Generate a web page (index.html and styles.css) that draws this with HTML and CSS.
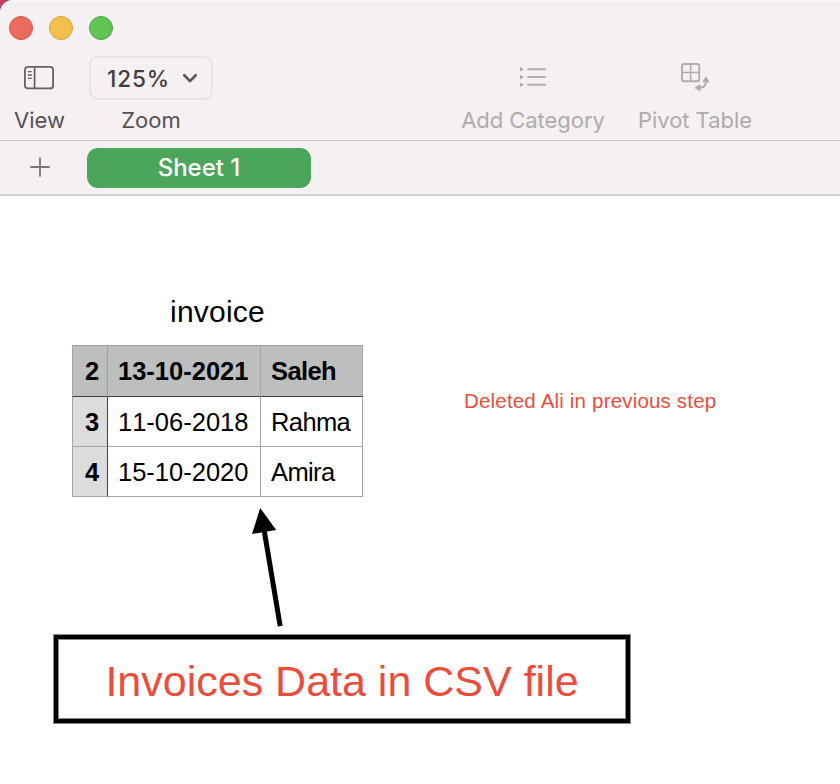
FILE: index.html
```html
<!DOCTYPE html>
<html lang="en">
<head>
<meta charset="utf-8">
<title>invoice</title>
<link rel="stylesheet" href="styles.css">
</head>
<body>
<div class="window">
  <header class="chrome">
    <div class="lights"><span class="light red"></span><span class="light yellow"></span><span class="light green"></span></div>
    <div class="toolbar">
      <div class="tool view">
        <div class="tool-icon"><svg width="32" height="26" viewBox="0 0 32 26" fill="none" stroke="#656163"><rect x="1.9" y="1.8" width="28.2" height="21.6" rx="3" stroke-width="1.8"/><path d="M11.6 2v21" stroke-width="1.7"/><path d="M4.8 6.7h4M4.8 10h4M4.8 13.4h4" stroke-width="1.3"/></svg></div>
        <span class="label">View</span>
      </div>
      <div class="tool zoom">
        <div class="tool-icon select"><span class="percent">125%</span><svg width="16" height="12" viewBox="0 0 16 12" fill="none" stroke="#5c585a" stroke-width="2.7" stroke-linecap="round" stroke-linejoin="round"><path d="M2.3 3.2 8 9.1l5.7-5.9"/></svg></div>
        <span class="label">Zoom</span>
      </div>
      <div class="tool category disabled">
        <div class="tool-icon"><svg width="28" height="24" viewBox="0 0 28 24"><path d="M1 2v4.6l4-2.3zM1 9.7v4.6l4-2.3zM1 17.4V22l4-2.3z" fill="#aeabac"/><path d="M9 4.3h17M9 12h17M9 19.7h17" stroke="#b2afb0" stroke-width="2" stroke-linecap="round"/></svg></div>
        <span class="label">Add Category</span>
      </div>
      <div class="tool pivot disabled">
        <div class="tool-icon"><svg width="30" height="30" viewBox="0 0 30 30" fill="none" stroke="#b0adae"><rect x="2" y="2" width="17.2" height="17.2" rx="2" stroke-width="1.9"/><path d="M10.6 2v17M2 10.6h17" stroke-width="1.5"/><path d="M26 19c0 4.5-2 6.8-6.5 6.8" stroke-width="2"/><path d="m26 15 3 4.8h-6zM15 25.8l5-3v6z" fill="#b0adae"/></svg></div>
        <span class="label">Pivot Table</span>
      </div>
    </div>
  </header>
  <nav class="tabs">
    <svg class="add" width="20" height="20" viewBox="0 0 20 20"><path d="M10 1v18M1 10h18" stroke="#7b7779" stroke-width="1.8" stroke-linecap="round"/></svg>
    <div class="tab"><span>Sheet 1</span></div>
  </nav>
  <main class="canvas">
    <div class="row">
      <section class="sheet">
        <h1 class="title"><span>invoice</span></h1>
        <div class="grid">
          <div class="cell head num">2</div><div class="cell head date">13-10-2021</div><div class="cell head name">Saleh</div>
          <div class="cell num">3</div><div class="cell date">11-06-2018</div><div class="cell name">Rahma</div>
          <div class="cell num">4</div><div class="cell date">15-10-2020</div><div class="cell name">Amira</div>
        </div>
      </section>
      <p class="note"><span>Deleted Ali in previous step</span></p>
    </div>
    <svg class="arrow" width="40" height="130" viewBox="0 0 40 130"><path d="M13.6 20 30.2 119.2" stroke="#000" stroke-width="5"/><path d="M10.2 1 2 27l24.2-4z"/></svg>
    <div class="callout"><span>Invoices Data in CSV file</span></div>
  </main>
</div>
</body>
</html>
```
FILE: styles.css
```css
* { box-sizing: border-box; }
body { margin: 0; background: #c43d62; overflow: hidden; }
.window { width: 840px; height: 784px; background: #fff; border-top-left-radius: 13px; overflow: hidden; color: #000; font-family: "Liberation Sans", Arial, sans-serif; }
.chrome { height: 141px; background: #f5f0f2; border-top: 1px solid #fcf9fa; border-bottom: 1px solid #cbc7c9; font-family: Inter, sans-serif; }
.lights { display: flex; gap: 16px; padding: 15px 0 0 9px; height: 55px; }
.light { width: 24px; height: 24px; border-radius: 50%; border: 1px solid; }
.red { background: #ed6a5e; border-color: #d7574d; }
.yellow { background: #f5bf4f; border-color: #d9a23e; }
.green { background: #61c554; border-color: #52a945; }
.toolbar { display: flex; }
.tool { display: flex; flex-direction: column; align-items: center; flex: none; white-space: nowrap; }
.tool-icon { height: 44px; display: flex; align-items: center; justify-content: center; }
.label { margin-top: 6px; font-size: 22px; line-height: 28px; color: #555153; letter-spacing: 0.05px; }
.disabled .label { color: #aeabac; letter-spacing: -0.05px; }
.view { width: 79px; }
.view .tool-icon { padding-right: 1px; }
.zoom { width: 124px; margin-left: 10px; }
.category { width: 144px; margin-left: 248px; }
.category .tool-icon { padding-bottom: 2px; }
.pivot { width: 116px; margin-left: 32px; }
.pivot .tool-icon { padding: 0 0 2px 0; }
.select { width: 124px; border: 2px solid #e7e2e4; border-radius: 9px; gap: 12px; padding-left: 3px; }
.percent { font-size: 22.5px; font-weight: 500; color: #423e40; letter-spacing: 0.9px; }
.tabs { height: 55px; display: flex; align-items: center; padding-left: 30px; background: #f5f0f2; border-bottom: 2px solid #d7d3d5; }
.add { margin-bottom: 2px; }
.tab { width: 224px; height: 40px; margin-left: 37px; margin-top: 1px; border-radius: 11px; background: #4ba55b; color: #fff; display: flex; align-items: center; justify-content: center; font: 500 24px/40px Inter, sans-serif; }
.canvas { padding: 98px 0 0 53px; }
.row { display: flex; height: 213px; }
.sheet { width: 291px; margin-left: 19px; }
.title { margin: 0; height: 51px; font-size: 30px; font-weight: 400; line-height: 36px; letter-spacing: 0.2px; text-align: center; }
.grid { display: grid; grid-template-columns: 36px 153px 102px; grid-template-rows: 52px 50px 50px; }
.cell { display: flex; align-items: center; padding: 2px 0 0 10px; font-size: 25.5px; font-kerning: none; border-right: 1px solid #a5a5a5; border-bottom: 1px solid #a5a5a5; white-space: nowrap; }
.head { padding-top: 0; background: #bdbfbe; font-weight: 700; border-top: 1px solid #a0a0a0; border-bottom-color: #404040; }
.name { letter-spacing: -0.6px; }
.num { padding-left: 12px; border-left: 1px solid #a5a5a5; background: #dcdcdc; font-weight: 700; border-right-color: #404040; }
.num.head { background: #bdbfbe; border-right-color: #a0a0a0; }
.note { margin: 95px 0 0 101px; font-size: 20.5px; line-height: 24px; color: #eb4d3d; white-space: nowrap; letter-spacing: 0.18px; }
.arrow { display: block; margin: 0 0 -3px 197px; }
.callout { width: 578px; height: 90px; border: 1px solid #888; box-shadow: inset 0 0 0 4px #000, inset 0 0 0 5px #888; display: flex; align-items: center; justify-content: center; font-size: 43px; color: #eb4d3d; white-space: nowrap; padding-top: 5px; }
```
